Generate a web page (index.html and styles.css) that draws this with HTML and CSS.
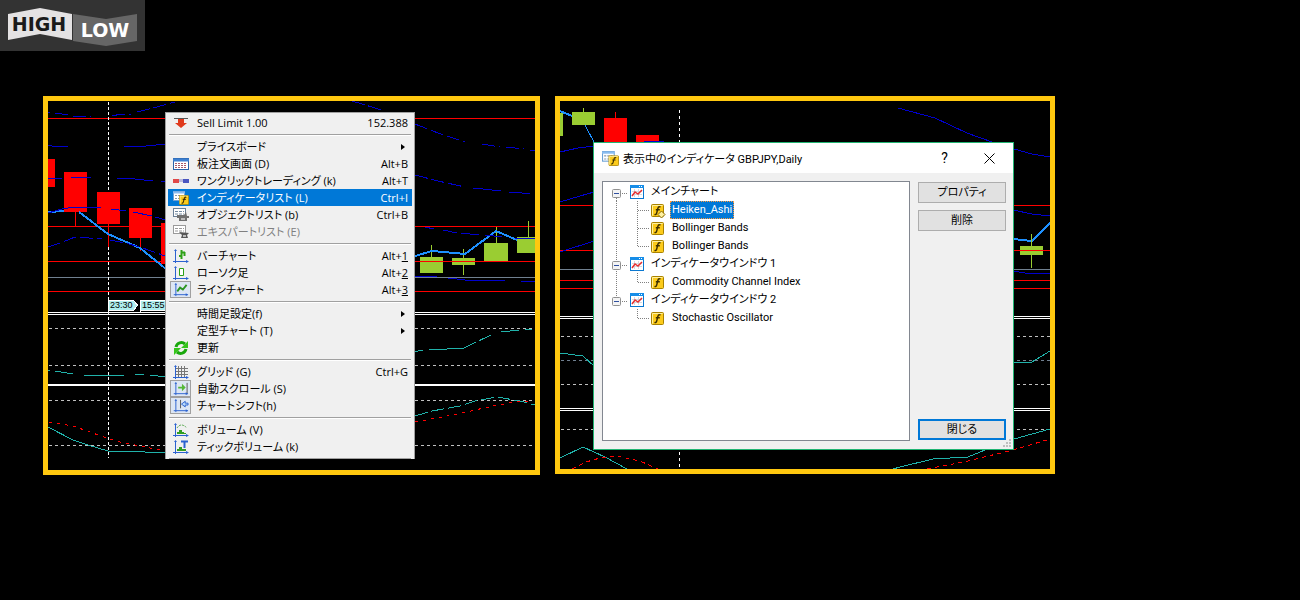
FILE: index.html
```html
<!DOCTYPE html>
<html lang="ja">
<head>
<meta charset="utf-8">
<meta name="viewport" content="width=device-width, initial-scale=1">
<title>HighLow - インディケータ</title>
<link rel="stylesheet" href="styles.css">
</head>
<body>
<svg class="defs" width="0" height="0" aria-hidden="true">
  <defs>
    <symbol id="axes" viewBox="0 0 16 16">
      <path d="M2.5 2v13M0 13.5h15" stroke="#2b62d0" fill="none"/>
      <path d="M1 3l1.500-2 1.500 2zM13 12l3 1.500-3 1.500z" fill="#2b62d0"/>
    </symbol>
    <symbol id="sell" viewBox="0 0 16 16">
      <path d="M1 3.500h14" stroke="#555"/>
      <path d="M5 4h6v4h3l-6 5-6-5h3z" fill="#e03a1c"/>
    </symbol>
    <symbol id="board" viewBox="0 0 16 16">
      <rect x=".5" y="2.500" width="15" height="11" fill="#fff" stroke="#2a62a8"/>
      <path d="M0 4h16" stroke="#3d7fd0" stroke-width="3"/>
      <path d="M2 7.500h12M2 9.500h12M2 11.500h12" stroke="#a85a6a" stroke-dasharray="2 1"/>
    </symbol>
    <symbol id="oneclick" viewBox="0 0 16 16">
      <path d="M0 6h6v4H0z" fill="#e04848"/><path d="M10 6h6v4h-6z" fill="#4a55c0"/><path d="M6 6h4v3H6z" fill="#b8b8dc"/>
    </symbol>
    <symbol id="fx" viewBox="0 0 13 13">
      <rect x=".5" y=".5" width="12" height="12" rx="1" fill="#fccb1c" stroke="#a98200"/>
      <path d="M1.500 11.500v-10h10" stroke="#fff0a0" fill="none"/>
      <path d="M9.500 3.200C8 2.200 7.200 3 6.800 4.800L5.700 9C5.300 10.600 4.500 10.800 3.500 10.300M4.800 5.700h4" stroke="#3e3000" stroke-width="1.400" fill="none"/>
    </symbol>
    <symbol id="listfx" viewBox="0 0 16 16">
      <rect x=".5" y="1.500" width="11" height="9" fill="#fff" stroke="#6ba0d5"/>
      <path d="M0 2.500h12" stroke="#8abcf0" stroke-width="2"/><path d="M2 5.500h8M2 8.500h8" stroke="#8497ad" stroke-dasharray="2 1"/>
      <use href="#fx" x="6" y="5" width="10" height="10"/>
    </symbol>
    <symbol id="listobj" viewBox="0 0 16 16">
      <rect x=".5" y="1.500" width="12" height="8" fill="#fff" stroke="#697f97"/>
      <path d="M2 4.500h9M2 7h9" stroke="#71889f" stroke-width="1" stroke-dasharray="3 1"/>
      <path d="M4 8h7l2-3 1 4h2v2h-2v3H6v-3H4z" fill="#707070"/><path d="M8 11h4v2H8z" fill="#bbb"/>
    </symbol>
    <symbol id="listexp" viewBox="0 0 16 16">
      <rect x=".5" y="1.500" width="12" height="8" fill="#fff" stroke="#999"/>
      <path d="M2 4.500h9M2 7h9" stroke="#999" stroke-dasharray="3 1"/>
      <path d="M6 8l10 1-2 2 1 3H8l1-3z" fill="#555"/><path d="M10 11h3v2h-3z" fill="#bbb"/>
    </symbol>
    <symbol id="bars" viewBox="0 0 16 16"><use href="#axes"/><path d="M8.500 2v9M6 8h2M9 4.500h3M11.500 4v4" stroke="#2da016" stroke-width="2"/></symbol>
    <symbol id="candle" viewBox="0 0 16 16"><use href="#axes"/><path d="M6.500 3.500h4v7h-4z" fill="#fff" stroke="#2da016"/></symbol>
    <symbol id="line" viewBox="0 0 16 16"><use href="#axes"/><path d="M4 10l3-4 3 2 4-5" fill="none" stroke="#299522" stroke-width="2"/></symbol>
    <symbol id="refresh" viewBox="0 0 16 16">
      <path d="M3 7a5.500 5.500 0 0 1 9-3M13 9a5.500 5.500 0 0 1-9 3" fill="none" stroke="#19a80c" stroke-width="3"/>
      <path d="M15 1v7H8zM1 15V8h7z" fill="#35c51b"/>
    </symbol>
    <symbol id="grid" viewBox="0 0 16 16"><use href="#axes"/><path d="M5.500 2v11M8.500 2v11M11.500 2v11M3 4.500h12M3 7.500h12M3 10.500h12" stroke="#777"/></symbol>
    <symbol id="scroll" viewBox="0 0 16 16"><use href="#axes"/><path d="M14.500 2v11" stroke="#555"/><path d="M5 6h4V3l4 4-4 4V8H5z" fill="#54b83a"/></symbol>
    <symbol id="shift" viewBox="0 0 16 16"><use href="#axes"/><path d="M7.500 2v9" stroke="#555"/><path d="M15.500 5.500h-3v-2l-4 3 4 3v-2h3z" fill="#b7d9f8" stroke="#2b62d0"/></symbol>
    <symbol id="volume" viewBox="0 0 16 16"><use href="#axes"/><path d="M4 12v-2h2V8h3v2h2v1h2v1z" fill="#319e22"/><path d="M4 6q4-6 10 0" fill="none" stroke="#58a850" stroke-dasharray="2 1"/></symbol>
    <symbol id="tick" viewBox="0 0 16 16"><use href="#axes"/><path d="M4 12v-2h2V8h3v2h4v2z" fill="#319e22"/><path d="M8 2.500h7M11.500 3v6" stroke="#2b62d0" stroke-width="2"/></symbol>
    <symbol id="chartwin" viewBox="0 0 14 14">
      <rect x=".5" y=".5" width="13" height="13" fill="#fff" stroke="#0b78d0"/>
      <path d="M0 1.500h14" stroke="#168de8" stroke-width="3"/><path d="M9 1.500h1M11 1.500h1" stroke="#fff"/>
      <path d="M2 6.500h10M2 9.500h10M4.500 4v8M8.500 4v8" stroke="#d5d9df"/>
      <path d="M2 11l3-4 3 2 4-4" fill="none" stroke="#e53030" stroke-width="1.500"/>
    </symbol>
  </defs>
</svg>

<header class="brand">
  <svg width="145" height="51" viewBox="0 0 145 51" role="img" aria-label="HIGH LOW">
    <path d="M8 14l32-6 32 6v26l-32-6-32 6z" fill="#e4e2e3"/>
    <path d="M73 14l33 5 31-5v27l-31 5-33-5z" fill="#666"/>
    <text class="logo-text" x="39" y="31" fill="#1a1a1a">HIGH</text>
    <text class="logo-text" x="105" y="37" fill="#fff">LOW</text>
  </svg>
</header>

<main class="shots">
  <section class="shot shot-menu">
    <svg class="chart" viewBox="48 101 487 369" aria-hidden="true">
      <path class="red" d="M48 118.500h487M48 226.500h487M48 291.500h487"/>
      <path class="slate" d="M48 277.500h487"/>
      <path class="level" d="M49 328.500h486M49 365.500h486M49 400.500h486M49 445.500h486"/>
      <path class="cursor" d="M108.500 102v356"/>
      <path class="white" d="M48 312.500h487M48 314.500h487M48 384.500h487M48 385.500h487"/>
      <path class="bear" d="M48 159h7v28h-7zM64 172h23v40h-11v14h-1v-14h-11zM97 192h23v32h-11v23h-1v-23h-11zM129 208h23v30h-11v13h-1v-13h-11zM161 223h10v41h-10z"/>
      <path class="bull" d="M420 257h11v-12h1v12h11v16h-23zM452 258h11v-9h1v9h11v7h-11v10h-1v-10h-11zM484 243h12v-16h1v16h11v18h-24zM517 237h11v-16h1v16h6v16h-18z"/>
      <path class="red" d="M48 261.500h487"/>
      <path class="price" d="M48 212l16-1M79 212l29 22 32 14 26 21M415 256l17-5 33 3 31-23 21 9"/>
      <path class="band broken" d="M48 112h2M55 113l14 2M73 116h18M112 116l9-2h10M137 112l16-4 22-6M352 101l33 10M415 124l23 9 27 9M482 144l18 3M506 147l18 2M530 150l5 1"/>
      <path class="band" d="M48 145l4 1h16M124 146h22l20-2M473 188l10 1 18 2M509 192l13 1 8 1"/>
      <path class="band broken" d="M415 175l23 6 27 6"/>
      <path class="band" d="M48 179l14-1M71 177h20M117 178l18 1 18 2M161 181h5M425 227l9 2M443 230l14 3M461 233l18 2M485 235l17 2M515 238l20 1"/>
      <path class="band" d="M48 213l14-4 13-2 26 1M111 209l15 2M133 212l19 4M155 217l11 3M415 276h22M448 278l17 2h40M521 281h14"/>
      <path class="band broken" d="M48 247l15-5 12-5 27 2M110 240l15 3 15 4 25 9"/>
      <path class="osc" d="M48 370h2M55 371l18 3M84 375h17l7 1 16-1M135 374h9M150 375l16 2M415 351h3l5-1M429 349h18l17-1M501 332l18-2M525 329h7"/>
      <path class="osc broken" d="M464 348l31-15"/>
      <path class="osc" d="M48 427l25 13 15 5 20 6h17l40 2"/>
      <path class="osc broken" d="M415 416l17-5 28-5 15-5 22-4 23 4 15 4"/>
      <path class="signal sparse" d="M49 422l24 4 14 5 20 7 13 4 30 6 15 3M415 422l43-8 17-4 23-5 17-3 17-1"/>
      <path class="tag" d="M108.500 312v-11.500h25l4 4.500-4 5.500h-25M140.500 312v-11.500h30v10h-30"/>
      <text class="tag-text" x="110" y="308">23:30</text>
      <text class="tag-text" x="142" y="308">15:55</text>
    </svg>

    <div class="menu" role="menu">
      <button class="item" role="menuitem"><span class="icon"><svg><use href="#sell"/></svg></span><span>Sell Limit 1.00</span><span>152.388</span></button>
      <hr>
      <button class="item" role="menuitem"><span class="icon"></span><span>プライスボード</span><span class="arrow"></span></button>
      <button class="item" role="menuitem"><span class="icon"><svg><use href="#board"/></svg></span><span>板注文画面 (D)</span><span>Alt+B</span></button>
      <button class="item" role="menuitem"><span class="icon"><svg><use href="#oneclick"/></svg></span><span>ワンクリックトレーディング (k)</span><span>Alt+T</span></button>
      <button class="item active" role="menuitem"><span class="icon"><svg><use href="#listfx"/></svg></span><span>インディケータリスト (L)</span><span>Ctrl+I</span></button>
      <button class="item" role="menuitem"><span class="icon"><svg><use href="#listobj"/></svg></span><span>オブジェクトリスト (b)</span><span>Ctrl+B</span></button>
      <button class="item" role="menuitem" disabled><span class="icon"><svg><use href="#listexp"/></svg></span><span>エキスパートリスト (E)</span></button>
      <hr>
      <button class="item" role="menuitem"><span class="icon"><svg><use href="#bars"/></svg></span><span>バーチャート</span><span>Alt+<u>1</u></span></button>
      <button class="item" role="menuitem"><span class="icon"><svg><use href="#candle"/></svg></span><span>ローソク足</span><span>Alt+<u>2</u></span></button>
      <button class="item" role="menuitem"><span class="icon checked"><svg><use href="#line"/></svg></span><span>ラインチャート</span><span>Alt+<u>3</u></span></button>
      <hr>
      <button class="item" role="menuitem"><span class="icon"></span><span>時間足設定(f)</span><span class="arrow"></span></button>
      <button class="item" role="menuitem"><span class="icon"></span><span>定型チャート (T)</span><span class="arrow"></span></button>
      <button class="item" role="menuitem"><span class="icon"><svg><use href="#refresh"/></svg></span><span>更新</span></button>
      <hr>
      <button class="item" role="menuitem"><span class="icon"><svg><use href="#grid"/></svg></span><span>グリッド (G)</span><span>Ctrl+G</span></button>
      <button class="item" role="menuitem"><span class="icon checked"><svg><use href="#scroll"/></svg></span><span>自動スクロール (S)</span></button>
      <button class="item" role="menuitem"><span class="icon checked"><svg><use href="#shift"/></svg></span><span>チャートシフト(h)</span></button>
      <hr>
      <button class="item" role="menuitem"><span class="icon"><svg><use href="#volume"/></svg></span><span>ボリューム (V)</span></button>
      <button class="item" role="menuitem"><span class="icon"><svg><use href="#tick"/></svg></span><span>ティックボリューム (k)</span></button>
      <hr class="last">
    </div>
  </section>

  <section class="shot shot-dialog">
    <svg class="chart" viewBox="560 101 490 368" aria-hidden="true">
      <path class="red" d="M560 205.500h490M560 280.500h490M560 288.500h490"/>
      <path class="slate" d="M560 269.500h490"/>
      <path class="level" d="M561 336.500h489M561 384.500h489M561 429.500h489"/>
      <path class="level mid" d="M561 360.500h489"/>
      <path class="white" d="M560 316.500h490M560 318.500h490M560 408.500h490M560 410.500h490"/>
      <path class="cursor spaced" d="M679.500 110v357"/>
      <path class="price thin" d="M585 125l10 19"/>
      <path class="price" d="M560 111l12 5M1013 239l19 2 18-18"/>
      <path class="bull" d="M560 113h3v23h-3zM572 112h11v-4h1v4h11v13h-23zM1020 246h11v-12h1v12h11v9h-11v13h-1v-13h-11z"/>
      <path class="bear" d="M604 118h11v-6h1v6h11v24h-23zM636 135h23v7h-23z"/>
      <path class="red" d="M560 250.500h490"/>
      <path class="band" d="M560 152l18-4 16-2M644 141h20M560 202l20-6 14-4M560 252l34-11M898 108l37 10 32 15 25 9 22 7 18 5 18 3M1013 210l19 4 18 2M1013 271l12 2 25 1"/>
      <path class="osc" d="M560 353l23 3 11 10M560 458l23-11 22 10 22 12M1013 363l19-1 18-11M893 469l7-2 33-8 35-2 17-7 29-11 36-10"/>
      <path class="signal" d="M572 469l14-7 14-4 16-2 24 5 18 8M927 469l41-8 45-11 37-11"/>
    </svg>

    <div class="dialog" role="dialog" aria-labelledby="dialog-title">
      <div class="titlebar">
        <svg class="title-icon"><use href="#listfx"/></svg>
        <h1 id="dialog-title">表示中のインディケータ GBPJPY,Daily</h1>
        <button class="caption" aria-label="ヘルプ">?</button>
        <button class="caption" aria-label="閉じる"><svg width="11" height="11"><path d="M.5.5l10 10M10.500.5l-10 10" stroke="#000"/></svg></button>
      </div>
      <div class="dialog-body">
        <ul class="tree" role="tree">
          <li class="node"><button class="toggle" aria-label="折りたたむ"><svg class="stem"><path class="dots" d="M13.500 15v3M19 10.500h6"/><rect x="9.500" y="6.500" width="8" height="8" rx="1"/><path class="minus" d="M11 10.500h5"/></svg></button><svg class="win"><use href="#chartwin"/></svg><span class="label">メインチャート</span></li>
          <li class="node"><svg class="branch"><path class="dots" d="M13.500 0v18M34.500 0v18M35 9.500h12"/></svg><svg class="fx"><use href="#fx"/><path d="M10.500 7l3.500 3.500-3.500 3.500L7 10.500z" fill="#fff0a0" stroke="#8a6a00"/></svg><span class="label selected">Heiken_Ashi</span></li>
          <li class="node"><svg class="branch"><path class="dots" d="M13.500 0v18M34.500 0v18M35 9.500h12"/></svg><svg class="fx"><use href="#fx"/></svg><span class="label">Bollinger Bands</span></li>
          <li class="node"><svg class="branch"><path class="dots" d="M13.500 0v18M34.500 0v10M35 9.500h12"/></svg><svg class="fx"><use href="#fx"/></svg><span class="label">Bollinger Bands</span></li>
          <li class="node"><button class="toggle" aria-label="折りたたむ"><svg class="stem"><path class="dots" d="M13.500 0v18M19 10.500h6"/><rect x="9.500" y="6.500" width="8" height="8" rx="1"/><path class="minus" d="M11 10.500h5"/></svg></button><svg class="win"><use href="#chartwin"/></svg><span class="label">インディケータウインドウ 1</span></li>
          <li class="node"><svg class="branch"><path class="dots" d="M13.500 0v18M34.500 0v10M35 9.500h12"/></svg><svg class="fx"><use href="#fx"/></svg><span class="label">Commodity Channel Index</span></li>
          <li class="node"><button class="toggle" aria-label="折りたたむ"><svg class="stem"><path class="dots" d="M13.500 0v6M19 10.500h6"/><rect x="9.500" y="6.500" width="8" height="8" rx="1"/><path class="minus" d="M11 10.500h5"/></svg></button><svg class="win"><use href="#chartwin"/></svg><span class="label">インディケータウインドウ 2</span></li>
          <li class="node"><svg class="branch"><path class="dots" d="M34.500 0v10M35 9.500h12"/></svg><svg class="fx"><use href="#fx"/></svg><span class="label">Stochastic Oscillator</span></li>
        </ul>
        <div class="actions">
          <button class="push">プロパティ</button>
          <button class="push">削除</button>
          <button class="push default">閉じる</button>
        </div>
      </div>
      <svg class="grip" width="8" height="8" aria-hidden="true"><path d="M6 0h2v2H6zM3 3h2v2H3zM6 3h2v2H6zM0 6h2v2H0zM3 6h2v2H3zM6 6h2v2H6z" fill="#bfbfbf"/></svg>
    </div>
  </section>
</main>
</body>
</html>
```
FILE: styles.css
```css
* { box-sizing: border-box; }

body {
  margin: 0;
  background: #000;
  color: #000;
  font-family: "Open Sans", "Noto Sans CJK JP", sans-serif;
  font-size: 11px;
  font-feature-settings: "palt";
}

button {
  margin: 0;
  padding: 0;
  border: 0;
  background: none;
  color: inherit;
  font: inherit;
  font-feature-settings: inherit;
}

.defs { position: absolute; }

.brand {
  width: fit-content;
  background: #333;
}
.brand svg { display: block; }
.logo-text {
  font: bold 19px "DejaVu Sans", sans-serif;
  text-anchor: middle;
}

.shots {
  display: flex;
  align-items: flex-start;
  gap: 15px;
  padding: 45px 43px;
}
.shot {
  position: relative;
  border: 5px solid #ffc80f;
}
.shot-menu { flex: 0 1 497px; }
.shot-dialog { flex: 0 1 500px; }

/* Price charts */
.chart {
  display: block;
  width: 100%;
  height: auto;
}
.chart path {
  fill: none;
  stroke-width: 1;
  shape-rendering: crispEdges;
}
.chart .red { stroke: #f00; }
.chart .slate { stroke: #708090; }
.chart .white { stroke: #fff; }
.chart .level { stroke: #c0c0c0; stroke-dasharray: 3 3; }
.chart .mid { stroke: #708090; }
.chart .cursor { stroke: #fff; stroke-dasharray: 3 2; }
.chart .spaced { stroke-dasharray: 3 3; }
.chart .bear { fill: #f00; }
.chart .bull { fill: #9acd32; }
.chart .price { stroke: #1e90ff; stroke-width: 2; }
.chart .thin { stroke-width: 1; }
.chart .band { stroke: #0000cd; }
.chart .osc { stroke: #20b2aa; }
.chart .broken { stroke-dasharray: 13 4; }
.chart .signal { stroke: #f00; stroke-dasharray: 4 4; }
.chart .sparse { stroke-dasharray: 3 5; }
.chart .tag { fill: #afeeee; stroke: #fff; }
.tag-text { font: 9px "Liberation Sans", sans-serif; }

/* Context menu */
.menu {
  position: absolute;
  top: 11px;
  left: 117px;
  width: 250px;
  padding: 1px 2px 0;
  border: 1px solid #a0a0a0;
  border-bottom: 0;
  background: #f0f0f0;
}
.item {
  display: grid;
  grid-template-columns: 21px 1fr auto;
  column-gap: 6px;
  align-items: center;
  width: 100%;
  height: 17px;
  padding: 0 4px 0 2px;
  line-height: 17px;
  text-align: left;
  white-space: nowrap;
}
.item.active { background: #0078d7; color: #fff; }
.item:disabled { color: #808080; }
.menu hr {
  height: 2px;
  margin: 3px 1px 2px;
  border: 0;
  border-top: 1px solid #a0a0a0;
  background: #fff;
}
.menu .last { margin-bottom: 0; height: 1px; }
.icon {
  display: flex;
  align-items: center;
  justify-content: center;
  height: 17px;
}
.icon svg { width: 16px; height: 16px; }
.checked { border: 1px solid #a0a0a0; background: #dce6f4; }
.checked svg { height: 15px; }
.arrow {
  margin-right: 3px;
  border: 3px solid transparent;
  border-left: 4px solid #000;
  border-right: 0;
}

/* Indicator dialog */
.dialog {
  position: absolute;
  top: 41px;
  left: 33px;
  width: 421px;
  border: 1px solid #22b573;
  background: #f0f0f0;
  font-family: Roboto, "Noto Sans CJK JP", sans-serif;
}
.titlebar {
  display: flex;
  align-items: center;
  height: 30px;
  padding: 0 1px 0 8px;
  background: #fff;
}
.title-icon { width: 17px; height: 17px; }
.titlebar h1 {
  flex: 1;
  margin: 0 0 0 4px;
  font-size: 11px;
  font-weight: 400;
  white-space: nowrap;
}
.caption {
  display: flex;
  align-items: center;
  justify-content: center;
  width: 45px;
  height: 30px;
  font-size: 14px;
}
.dialog-body {
  display: flex;
  gap: 8px;
  padding: 8px 7px 8px 8px;
}
.tree {
  flex: 1;
  min-height: 260px;
  margin: 0;
  padding: 1px 0;
  border: 1px solid #828790;
  background: #fff;
  list-style: none;
}
.node {
  display: flex;
  align-items: center;
  height: 18px;
  white-space: nowrap;
}
.toggle { display: block; height: 18px; }
.stem { display: block; width: 27px; height: 18px; }
.stem rect { fill: #f4f4f4; stroke: #919191; }
.branch { width: 48px; height: 18px; }
.minus { stroke: #3050a0; }
.dots { fill: none; stroke: #808080; stroke-dasharray: 1 1; }
.win { width: 14px; height: 14px; }
.fx { width: 13px; height: 13px; margin-right: 1px; overflow: visible; }
.label {
  margin-left: 5px;
  padding: 0 1px;
  border: 1px dotted transparent;
  line-height: 16px;
}
.selected {
  border-color: #ff9b3c;
  background: #0078d7;
  color: #fff;
}
.actions {
  display: flex;
  flex-direction: column;
  gap: 7px;
  width: 88px;
  padding: 1px 0;
}
.push {
  height: 21px;
  border: 1px solid #adadad;
  background: #e1e1e1;
  line-height: 19px;
}
.push.default {
  margin-top: auto;
  border: 2px solid #0078d7;
  line-height: 17px;
}
.grip {
  position: absolute;
  right: 2px;
  bottom: 2px;
}
```
